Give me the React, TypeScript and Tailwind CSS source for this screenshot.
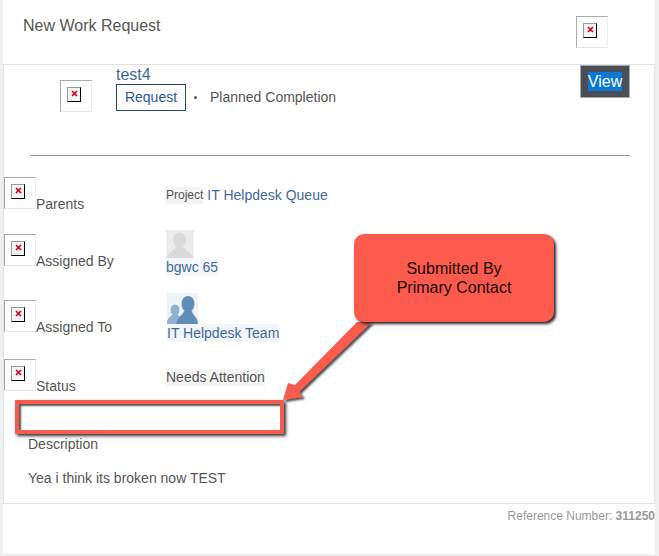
type RowProps = { label: string; boxClass: string; children: React.ReactNode };

function BrokenImage({ className = "" }: { className?: string }) {
  return (
    <div className={`w-8 h-8 shrink-0 border border-t-[#aaaaaa] border-l-[#aaaaaa] border-r-[#eeeeee] border-b-[#e6e6e6] bg-white pt-[6px] pl-[6px] ${className}`}>
      <div className="w-[14px] h-[15px] border border-t-[#999999] border-l-[#999999] border-r-black border-b-black bg-[#f4f4f4] flex justify-center pt-[2px]">
        <svg width="7" height="7" viewBox="0 0 7 7">
          <path d="M1 1 L6 6 M6 1 L1 6" stroke="#d4001a" strokeWidth="1.7" />
        </svg>
      </div>
    </div>
  );
}

function Row({ label, boxClass, children }: RowProps) {
  return (
    <div className={`flex h-8 ${boxClass}`}>
      <div className="w-[162px] flex items-end shrink-0">
        <BrokenImage />
        <span className="-mb-[3px] text-[14px] leading-[16px] text-[#555555]">{label}</span>
      </div>
      <div className="flex-1">{children}</div>
    </div>
  );
}

function PersonIcon() {
  return (
    <div className="w-[28px] h-[28px] bg-[#ebebeb] overflow-hidden">
      <svg width="28" height="28" viewBox="0 0 28 28">
        <ellipse cx="13.5" cy="10" rx="6.5" ry="7.5" fill="#dadada" />
        <path d="M1 28 C2 22 7 21 10 17 L17 17 C20 21 25 22 27 28 Z" fill="#dadada" />
      </svg>
    </div>
  );
}

function TeamIcon() {
  return (
    <div className="w-[31px] h-[31px] bg-[#eef3f8] overflow-hidden">
      <svg width="31" height="31" viewBox="0 0 31 31">
        <ellipse cx="8" cy="17" rx="4.5" ry="5.5" fill="#8fb0cf" />
        <path d="M0 31 C0 25 3 24 5 22 L11 22 C13 24 14 26 14 31 Z" fill="#8fb0cf" />
        <ellipse cx="21" cy="11" rx="6.5" ry="8" fill="#5f8db8" />
        <path d="M9 31 C10 24 15 23 17 18 L25 18 C26 23 31 24 31 31 Z" fill="#5f8db8" />
      </svg>
    </div>
  );
}

export default function App() {
  return (
    <div className="relative w-[659px] h-[556px] bg-[#efefef] overflow-hidden font-['Liberation_Sans',Arial,sans-serif]">
      <div className="ml-[3px] w-[652px] h-[554px] bg-white flex flex-col">
        {/* header */}
        <div className="h-[64px] flex justify-between shrink-0">
          <h1 className="pl-5 pt-[16px] text-[16px] leading-[19px] text-[#555555]">New Work Request</h1>
          <BrokenImage className="mt-4 mr-[47px]" />
        </div>

        {/* details card */}
        <div className="h-[440px] border border-[#e2e2e2] shrink-0">
          <div className="flex h-[90px]">
            <BrokenImage className="ml-[56px] mt-[15px]" />
            <div className="ml-6 flex-1">
              <a className="block text-[16px] leading-[19px] text-[#3d6a9c]">test4</a>
              <div className="flex items-center">
                <span className="w-[70px] h-[27px] border border-[#1f4788] text-[14px] text-[#2b5797] flex items-center justify-center">Request</span>
                <span className="ml-[8px] w-[3px] h-[3px] rounded-full bg-[#555555]" />
                <span className="ml-[13px] text-[14px] text-[#555555]">Planned Completion</span>
              </div>
            </div>
            <div className="mr-6 w-[50px] h-[33px] bg-[#4a4e59] border border-[#aaaaaa] flex items-center justify-center">
              <span className="bg-[#0b78d1] text-white text-[16px] leading-[19px]">View</span>
            </div>
          </div>
          <hr className="ml-[26px] w-[600px] border-0 h-px bg-[#999999]" />

          <Row label="Parents" boxClass="mt-[21px]">
            <div className="mt-[9px] flex items-center h-[18px]">
              <span className="bg-[#f3f3f3] text-[12px] leading-[17px] text-[#555555]">Project</span>
              <a className="ml-1 text-[14px] text-[#3d6a9c]">IT Helpdesk Queue</a>
            </div>
          </Row>

          <Row label="Assigned By" boxClass="mt-[25px]">
            <div className="-mt-[4px]">
              <PersonIcon />
              <a className="block w-fit bg-[#f5f7fa] text-[14px] leading-[18px] text-[#3d6a9c]">bgwc 65</a>
            </div>
          </Row>

          <Row label="Assigned To" boxClass="mt-[34px]">
            <div className="-mt-[7px] ml-px">
              <TeamIcon />
              <a className="block w-fit bg-[#f2f5f9] text-[14px] leading-[18px] text-[#3d6a9c]">IT Helpdesk Team</a>
            </div>
          </Row>

          <Row label="Status" boxClass="mt-[27px]">
            <div className="mt-[10px]">
              <span className="block w-fit bg-[#f4f4f4] text-[14px] leading-[17px] text-[#555555]">Needs Attention</span>
            </div>
          </Row>

          <p className="mt-[45px] ml-6 text-[14px] leading-[16px] text-[#555555]">Description</p>
          <p className="mt-[18px] ml-6 text-[14px] leading-[16px] text-[#555555]">Yea i think its broken now TEST</p>
        </div>

        {/* footer */}
        <p className="pt-[5px] text-right text-[12px] leading-[14px] text-[#999999]">
          Reference Number: <b>311250</b>
        </p>
      </div>

      {/* annotation overlay */}
      <svg className="absolute left-0 top-0 pointer-events-none" width="659" height="556" viewBox="0 0 659 556">
        <defs>
          <filter id="sh" x="-20%" y="-20%" width="140%" height="140%">
            <feDropShadow dx="2" dy="2" stdDeviation="1.2" floodColor="#222222" floodOpacity="0.8" />
          </filter>
        </defs>
        <path
          d="M357 322 L372 322 L299 392 L303 397 L283 400 L288 383 L295 385 Z"
          fill="#f95c4e"
          filter="url(#sh)"
        />
      </svg>
      <div className="absolute left-[15px] top-[400px] w-[269px] h-[34px] border-4 border-[#f55c4f] shadow-[2px_2px_3px_#333333,inset_2px_2px_2px_#555555]" />
      <div className="absolute left-[354px] top-[234px] w-[200px] h-[88px] rounded-[10px] bg-[#fb5a4c] shadow-[2px_2px_3px_#222222] flex items-center justify-center text-center text-[16px] leading-[19px] text-[#1a0a08]">
        <span>Submitted By<br />Primary Contact</span>
      </div>
    </div>
  );
}
